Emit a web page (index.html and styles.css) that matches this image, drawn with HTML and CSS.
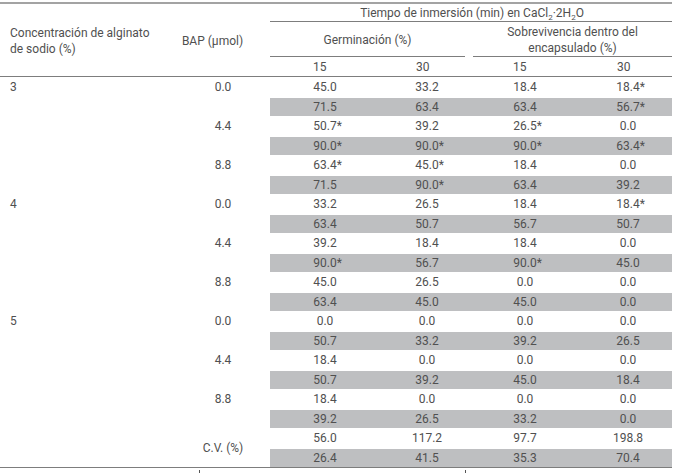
FILE: index.html
```html
<!DOCTYPE html>
<html lang="es">
<head>
<meta charset="utf-8">
<link rel="stylesheet" href="styles.css">
</head>
<body>
<table class="tbl">
  <colgroup>
    <col class="c-a"><col class="c-b"><col class="c-c"><col class="c-d"><col class="c-e"><col class="c-f">
  </colgroup>
  <thead>
    <tr class="h1">
      <th rowspan="3" class="hl">Concentración de alginato<br>de sodio (%)</th>
      <th rowspan="3" class="hb">BAP (µmol)</th>
      <th colspan="4" class="ht">Tiempo de inmersión (min) en CaCl<sub>2</sub>·2H<sub>2</sub>O</th>
    </tr>
    <tr class="h2">
      <th colspan="2" class="hg"><div class="u">Germinación (%)</div></th>
      <th colspan="2" class="hs"><div class="u">Sobrevivencia dentro del<br>encapsulado (%)</div></th>
    </tr>
    <tr class="h3">
      <th class="hc">15</th><th class="hd">30</th><th class="he">15</th><th class="hf">30</th>
    </tr>
  </thead>
  <tbody>
    <tr><td class="g">3</td><td class="b">0.0</td><td class="c">45.0</td><td class="d">33.2</td><td class="e">18.4</td><td class="f">18.4<span class="ast">*</span></td></tr>
    <tr class="z"><td></td><td></td><td class="c">71.5</td><td class="d">63.4</td><td class="e">63.4</td><td class="f">56.7<span class="ast">*</span></td></tr>
    <tr><td></td><td class="b">4.4</td><td class="c">50.7<span class="ast">*</span></td><td class="d">39.2</td><td class="e">26.5<span class="ast">*</span></td><td class="f">0.0</td></tr>
    <tr class="z"><td></td><td></td><td class="c">90.0<span class="ast">*</span></td><td class="d">90.0<span class="ast">*</span></td><td class="e">90.0<span class="ast">*</span></td><td class="f">63.4<span class="ast">*</span></td></tr>
    <tr><td></td><td class="b">8.8</td><td class="c">63.4<span class="ast">*</span></td><td class="d">45.0<span class="ast">*</span></td><td class="e">18.4</td><td class="f">0.0</td></tr>
    <tr class="z"><td></td><td></td><td class="c">71.5</td><td class="d">90.0<span class="ast">*</span></td><td class="e">63.4</td><td class="f">39.2</td></tr>
    <tr><td class="g">4</td><td class="b">0.0</td><td class="c">33.2</td><td class="d">26.5</td><td class="e">18.4</td><td class="f">18.4<span class="ast">*</span></td></tr>
    <tr class="z"><td></td><td></td><td class="c">63.4</td><td class="d">50.7</td><td class="e">56.7</td><td class="f">50.7</td></tr>
    <tr><td></td><td class="b">4.4</td><td class="c">39.2</td><td class="d">18.4</td><td class="e">18.4</td><td class="f">0.0</td></tr>
    <tr class="z"><td></td><td></td><td class="c">90.0<span class="ast">*</span></td><td class="d">56.7</td><td class="e">90.0<span class="ast">*</span></td><td class="f">45.0</td></tr>
    <tr><td></td><td class="b">8.8</td><td class="c">45.0</td><td class="d">26.5</td><td class="e">0.0</td><td class="f">0.0</td></tr>
    <tr class="z"><td></td><td></td><td class="c">63.4</td><td class="d">45.0</td><td class="e">45.0</td><td class="f">0.0</td></tr>
    <tr><td class="g">5</td><td class="b">0.0</td><td class="c">0.0</td><td class="d">0.0</td><td class="e">0.0</td><td class="f">0.0</td></tr>
    <tr class="z"><td></td><td></td><td class="c">50.7</td><td class="d">33.2</td><td class="e">39.2</td><td class="f">26.5</td></tr>
    <tr><td></td><td class="b">4.4</td><td class="c">18.4</td><td class="d">0.0</td><td class="e">0.0</td><td class="f">0.0</td></tr>
    <tr class="z"><td></td><td></td><td class="c">50.7</td><td class="d">39.2</td><td class="e">45.0</td><td class="f">18.4</td></tr>
    <tr><td></td><td class="b">8.8</td><td class="c">18.4</td><td class="d">0.0</td><td class="e">0.0</td><td class="f">0.0</td></tr>
    <tr class="z"><td></td><td></td><td class="c">39.2</td><td class="d">26.5</td><td class="e">33.2</td><td class="f">0.0</td></tr>
    <tr><td></td><td rowspan="2" class="b cv">C.V. (%)</td><td class="c">56.0</td><td class="d">117.2</td><td class="e">97.7</td><td class="f">198.8</td></tr>
    <tr class="z last"><td></td><td class="c">26.4</td><td class="d">41.5</td><td class="e">35.3</td><td class="f">70.4</td></tr>
  </tbody>
</table>
<div class="ticks"><span class="tick"></span><span class="tick"></span></div>
</body>
</html>
```

FILE: styles.css
```css
html, body {
  margin: 0;
  padding: 0;
  background: #fff;
}
body {
  padding-top: 2px;
  font-family: Roboto, "Liberation Sans", sans-serif;
  font-size: 12px;
  color: #505050;
}
.tbl {
  width: 672px;
  border-collapse: separate;
  border-spacing: 0;
  table-layout: fixed;
  border-top: 2px solid #a3a3a3;
  border-bottom: 1px solid #7d7d7d;
}
.c-a { width: 165px; }
.c-b { width: 105px; }
.c-c { width: 99px; }
.c-d { width: 100px; }
.c-e { width: 101px; }
.c-f { width: 102px; }

th, td {
  padding: 0;
  font-weight: 400;
  line-height: 16px;
  white-space: nowrap;
}
th { vertical-align: middle; }

.hl {
  text-align: left;
  padding-left: 10px;
  padding-top: 2px;
  border-bottom: 1px solid #7d7d7d;
}
.hb {
  text-align: center;
  padding-right: 10px;
  padding-top: 2px;
  border-bottom: 1px solid #7d7d7d;
}
.h1 { height: 18px; }
.ht {
  text-align: center;
  padding-left: 2px;
  border-bottom: 1px solid #7d7d7d;
}
.ht sub {
  font-size: 8px;
  line-height: 0;
  vertical-align: -3px;
}
.hg { padding-right: 4px; vertical-align: bottom; }
.hs { padding-left: 4px; vertical-align: bottom; }
.u {
  height: 35px;
  box-sizing: border-box;
  display: flex;
  align-items: center;
  justify-content: center;
  text-align: center;
  border-bottom: 1px solid #7d7d7d;
  padding-top: 2px;
}
.h3 { height: 20px; }
.h3 th {
  text-align: left;
  border-bottom: 1px solid #7d7d7d;
}
.hc { padding-left: 43px; }
.hd { padding-left: 47px; }
.he { padding-left: 44px; }
.hf { padding-left: 47px; }

tbody tr { height: 19.5px; }
td { vertical-align: middle; }
.g { text-align: left; padding-left: 10px; }
.b { text-align: center; padding-left: 11px; }
.c, .d, .e, .f { text-align: center; }
.c { padding-left: 11px; }
.d { padding-left: 16px; }
.e { padding-left: 11px; }
.f { padding-left: 14px; }
.ast {
  display: inline-block;
  width: 0;
  overflow: visible;
}
.z .c, .z .d, .z .e, .z .f { background: #bebfc1; }
.z td { border-top: 1px solid #fff; }

.ticks {
  display: flex;
  gap: 265px;
  padding-left: 199px;
  margin-top: 2px;
}
.tick {
  width: 1px;
  height: 3px;
  background: #555;
}
```
